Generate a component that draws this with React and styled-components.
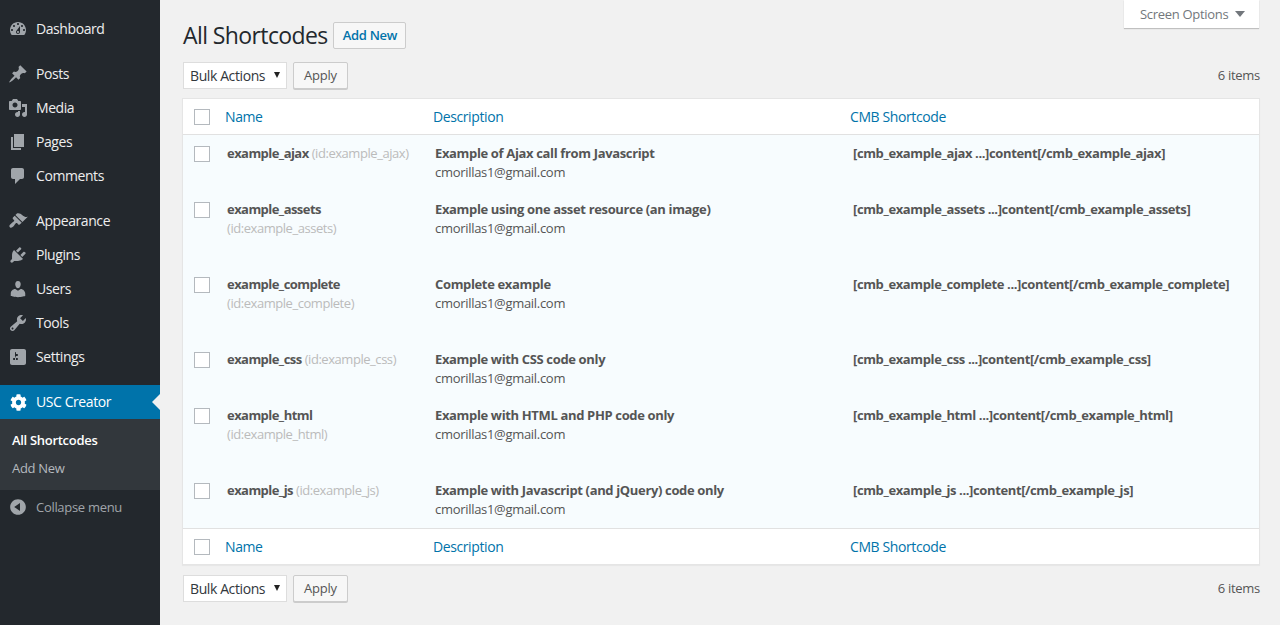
import styled, { createGlobalStyle } from "styled-components";
import { FaCog } from "react-icons/fa";

const GlobalStyle = createGlobalStyle`
  html, body {
    margin: 0;
    height: 100%;
    background: #f1f1f1;
    overflow: hidden;
  }
  * {
    box-sizing: border-box;
  }
  body {
    font-family: "Open Sans", "Liberation Sans", sans-serif;
    font-size: 13px;
    letter-spacing: -0.3px;
    color: #444;
  }
`;

const Page = styled.div`
  display: grid;
  grid-template-columns: 160px 1fr;
  height: 625px;
`;

const Sidebar = styled.nav`
  background: #23282d;
  padding-top: 12px;
`;

const MenuGroup = styled.ul`
  list-style: none;
  margin: 0 0 11px;
  padding: 0;
`;

const MenuItem = styled.li`
  position: relative;
  display: flex;
  align-items: center;
  height: 34px;
  padding: 0 0 2px 8px;
  gap: 8px;
  font-size: 14px;
  letter-spacing: -0.42px;
  color: ${(p) => (p.$current ? "#fff" : "#eee")};
  background: ${(p) => (p.$current ? "#0073aa" : "transparent")};
  svg {
    width: 20px;
    height: 20px;
    flex: none;
    margin-top: 2px;
    fill: ${(p) => (p.$current ? "#fff" : "#a0a5aa")};
  }
  ${(p) =>
    p.$current &&
    `&::after {
      content: "";
      position: absolute;
      right: 0;
      top: 9px;
      border: 8px solid transparent;
      border-right-color: #f1f1f1;
      border-left-width: 0;
    }`}
`;

const Cog = styled(FaCog)`
  && {
    width: 17px;
    height: 17px;
    margin: 2px 1px 0 2px;
  }
`;

const SubMenu = styled.ul`
  list-style: none;
  margin: 0;
  padding: 7px 0;
  height: 71px;
  background: #32373c;
`;

const SubItem = styled.li`
  height: 28px;
  line-height: 28px;
  padding-left: 12px;
  font-size: 13px;
  font-weight: ${(p) => (p.$current ? 600 : 400)};
  color: ${(p) => (p.$current ? "#fff" : "#b4b9be")};
`;

const CollapseRow = styled.div`
  display: flex;
  align-items: center;
  height: 34px;
  padding-left: 8px;
  gap: 8px;
  font-size: 13px;
  color: #a0a5aa;
  svg {
    width: 20px;
    height: 20px;
    fill: #a0a5aa;
  }
`;

const Main = styled.main`
  padding: 0 20px 0 22px;
  min-width: 0;
`;

const Header = styled.header`
  display: flex;
  justify-content: space-between;
  align-items: flex-start;
  height: 62px;
`;

const TitleRow = styled.div`
  display: flex;
  align-items: center;
  gap: 5px;
  margin: 21px 0 0 1px;
`;

const Title = styled.h1`
  margin: 0;
  padding-top: 1px;
  font-size: 23px;
  font-weight: 400;
  line-height: 27px;
  letter-spacing: -0.6px;
  color: #23282d;
`;

const Button = styled.button`
  height: 27px;
  padding: ${(p) => (p.$primary ? "0 8px 1px 9px" : "0 10px 1px")};
  border: 1px solid #ccc;
  border-radius: 2px;
  background: #f7f7f7;
  font: inherit;
  letter-spacing: ${(p) => (p.$primary ? "-0.3px" : "-0.2px")};
  font-size: 13px;
  font-weight: ${(p) => (p.$primary ? 600 : 400)};
  color: ${(p) => (p.$primary ? "#0073aa" : "#555")};
  box-shadow: ${(p) => (p.$primary ? "none" : "0 1px 0 #ccc")};
`;

const ScreenOptions = styled.div`
  display: flex;
  align-items: center;
  gap: 7px;
  width: 135px;
  height: 28px;
  margin-right: 1px;
  padding: 0 0 1px 16px;
  background: #fff;
  font-size: 13px;
  color: #72777c;
  box-shadow: 0 1px 1px rgba(0, 0, 0, 0.2);
`;

const CaretDown = styled.span`
  width: 0;
  height: 0;
  border: 5px solid transparent;
  border-top: 6px solid #72777c;
  border-bottom-width: 0;
`;

const TableNav = styled.div`
  display: flex;
  align-items: center;
  gap: 6px;
  height: 27px;
  margin-left: 1px;
`;

const SelectWrap = styled.div`
  position: relative;
  width: 104px;
  height: 27px;
  &::after {
    content: "";
    position: absolute;
    right: 7px;
    top: 10px;
    border: 3px solid transparent;
    border-top: 6px solid #222;
    border-bottom-width: 0;
  }
`;

const Select = styled.select`
  appearance: none;
  width: 100%;
  height: 100%;
  padding: 0 0 1px 6px;
  border: 1px solid #ddd;
  border-radius: 0;
  background: #fff;
  font: inherit;
  font-size: 14px;
  letter-spacing: -0.4px;
  color: #32373c;
`;

const Count = styled.span`
  margin-left: auto;
  padding-bottom: 2px;
  color: #555;
`;

const Table = styled.section`
  margin: 9px 0 10px;
  border: 1px solid #e5e5e5;
  background: #fff;
  box-shadow: 0 1px 1px rgba(0, 0, 0, 0.04);
`;

const cols = "42px 208px 417px 1fr";

const HeadRow = styled.div`
  display: grid;
  grid-template-columns: ${cols};
  align-items: center;
  height: 36px;
  border-${(p) => (p.$foot ? "top" : "bottom")}: 1px solid #e1e1e1;
  color: #0073aa;
  font-size: 14px;
  letter-spacing: -0.4px;
`;

const HeadCell = styled.span`
  white-space: nowrap;
`;

const Body = styled.div`
  background: #f7fcfe;
`;

const Row = styled.div`
  display: grid;
  grid-template-columns: ${cols};
  height: ${(p) => p.$height}px;
  padding-top: 9px;
`;

const Box = styled.span`
  display: block;
  width: 16px;
  height: 16px;
  margin-left: 11px;
  border: 1px solid #b4b9be;
  background: #fff;
`;

const CheckCell = styled.div`
  padding-top: 2px;
`;

const NameCell = styled.div`
  padding-left: 2px;
  padding-right: 20px;
  line-height: 19px;
`;

const Strong = styled.strong`
  font-weight: 700;
  color: #555;
  letter-spacing: ${(p) => p.$spacing || "-0.35px"};
`;

const IdLabel = styled.span`
  color: #bbb;
  letter-spacing: -0.45px;
`;

const DescCell = styled.div`
  padding-left: 2px;
  line-height: 19px;
  color: #555;
`;

const ShortcodeCell = styled.div`
  padding-left: 3px;
  line-height: 19px;
`;

const Line = styled.div``;

const icons = {
  dashboard:
    "M3.76 16h12.48c1.1-1.37 1.76-3.11 1.76-5 0-4.42-3.58-8-8-8s-8 3.58-8 8c0 1.89.66 3.63 1.76 5zM10 4c.55 0 1 .45 1 1s-.45 1-1 1-1-.45-1-1 .45-1 1-1zM6 6c.55 0 1 .45 1 1s-.45 1-1 1-1-.45-1-1 .45-1 1-1zm8 0c.55 0 1 .45 1 1s-.45 1-1 1-1-.45-1-1 .45-1 1-1zm-5.37 5.55L12 7v6c0 1.1-.9 2-2 2s-2-.9-2-2c0-.57.24-1.08.63-1.45zM4 10c.55 0 1 .45 1 1s-.45 1-1 1-1-.45-1-1 .45-1 1-1zm12 0c.55 0 1 .45 1 1s-.45 1-1 1-1-.45-1-1 .45-1 1-1zm-5 3c0-.55-.45-1-1-1s-1 .45-1 1 .45 1 1 1 1-.45 1-1z",
  posts:
    "M10.44 3.02l1.82-1.82 6.36 6.35-1.83 1.82c-1.05-.68-2.48-.57-3.41.36l-.75.75c-.92.93-1.04 2.35-.35 3.41l-1.83 1.82-2.41-2.41-2.8 2.79c-.42.42-3.38 2.71-3.8 2.29s1.86-3.39 2.28-3.81l2.79-2.79L4.1 9.36l1.83-1.82c1.05.69 2.48.57 3.4-.36l.75-.75c.93-.92 1.05-2.35.36-3.41z",
  media:
    "M13 11V4c0-.55-.45-1-1-1h-1.67L9 1H5L3.67 3H2c-.55 0-1 .45-1 1v7c0 .55.45 1 1 1h10c.55 0 1-.45 1-1zM7 4.5c1.38 0 2.5 1.12 2.5 2.5S8.38 9.5 7 9.5 4.5 8.38 4.5 7 5.62 4.5 7 4.5zM14 6h5v10.5c0 1.38-1.12 2.5-2.5 2.5S14 17.88 14 16.5s1.12-2.5 2.5-2.5c.17 0 .34.02.5.05V9h-3V6zm-4 8.05V13h2v3.5c0 1.38-1.12 2.5-2.5 2.5S7 17.88 7 16.5 8.12 14 9.5 14c.17 0 .34.02.5.05z",
  pages: "M6 15V2h10v13H6zm-1 1h8v2H3V5h2v11z",
  comments:
    "M5 2h9c1.1 0 2 .9 2 2v7c0 1.1-.9 2-2 2h-2l-5 5v-5H5c-1.1 0-2-.9-2-2V4c0-1.1.9-2 2-2z",
  appearance:
    "M14.48 11.06L7.41 3.99l1.5-1.5c.5-.56 2.3-.47 3.51.32 1.21.8 1.43 1.28 2.91 2.1 1.18.64 2.45 1.26 4.45.85zm-.71.71L6.7 4.7 4.93 6.47c-.39.39-.39 1.02 0 1.41l1.06 1.06c.39.39.39 1.03 0 1.42-.6.6-1.43 1.11-2.21 1.69-.35.26-.7.53-1.01.84C1.43 13.71.91 15.2 1.85 16.14c.94.95 2.43.43 3.44-.58.31-.31.58-.66.84-1.01.58-.78 1.09-1.61 1.69-2.21.39-.39 1.03-.39 1.42 0l1.06 1.06c.39.39 1.02.39 1.41 0z",
  plugins:
    "M13.11 4.36L9.87 7.6 8 5.73l3.24-3.24c.35-.34 1.05-.2 1.56.32.52.51.66 1.21.31 1.55zm-8 1.77l.91-1.12 9.01 9.01-1.19.84c-.71.71-2.63 1.16-3.82 1.16H6.14L4.9 17.26c-.59.59-1.54.59-2.12 0-.59-.58-.59-1.53 0-2.12l1.24-1.24v-3.88c0-1.13.4-3.19 1.09-3.89zm7.26 3.97l3.24-3.24c.34-.35 1.04-.21 1.55.31.52.51.66 1.21.31 1.55l-3.24 3.25z",
  users:
    "M10 9.25c-2.27 0-2.73-3.44-2.73-3.44C7 4.02 7.82 2 9.97 2c2.16 0 2.98 2.02 2.71 3.81 0 0-.41 3.44-2.68 3.44zm0 2.57L12.72 10c2.39 0 4.52 2.33 4.52 4.53v2.49s-3.65 1.13-7.24 1.13c-3.65 0-7.24-1.13-7.24-1.13v-2.49c0-2.25 1.94-4.48 4.47-4.48z",
  tools:
    "M16.68 9.77c-1.34 1.34-3.3 1.67-4.95.99l-5.41 6.52c-.99.99-2.59.99-3.58 0s-.99-2.59 0-3.57l6.52-5.42c-.68-1.65-.35-3.61.99-4.95 1.28-1.28 3.12-1.62 4.72-1.06l-2.89 2.89 2.82 2.82 2.86-2.87c.53 1.58.18 3.39-1.08 4.65zM3.81 16.21c.4.39 1.04.39 1.43 0 .4-.4.4-1.04 0-1.43-.39-.4-1.03-.4-1.43 0-.39.39-.39 1.03 0 1.43z",
  settings:
    "M18 16V4c0-1.1-.9-2-2-2H4c-1.1 0-2 .9-2 2v12c0 1.1.9 2 2 2h12c1.1 0 2-.9 2-2zM8 11h1c.55 0 1 .45 1 1s-.45 1-1 1H8v1.5c0 .28-.22.5-.5.5s-.5-.22-.5-.5V13H6c-.55 0-1-.45-1-1s.45-1 1-1h1V5.5c0-.28.22-.5.5-.5s.5.22.5.5V7h1c.55 0 1 .45 1 1s-.45 1-1 1h-1v5.5c0 .28-.22.5-.5.5s-.5-.22-.5-.5V9z",
  collapse:
    "M10 2.16c4.33 0 7.84 3.51 7.84 7.84s-3.51 7.84-7.84 7.84S2.16 14.33 2.16 10 5.71 2.16 10 2.16zm2 11.72V6.12L6.18 9.97z",
};

const Icon = ({ name }) => (
  <svg viewBox="0 0 20 20" aria-hidden="true">
    <path d={icons[name]} />
  </svg>
);

const shortcodes = [
  { id: "example_ajax", desc: "Example of Ajax call from Javascript", height: 56 },
  { id: "example_assets", desc: "Example using one asset resource (an image)", height: 75 },
  { id: "example_complete", desc: "Complete example", height: 75 },
  { id: "example_css", desc: "Example with CSS code only", height: 56 },
  { id: "example_html", desc: "Example with HTML and PHP code only", height: 75 },
  { id: "example_js", desc: "Example with Javascript (and jQuery) code only", height: 56 },
];

const menuTop = [["dashboard", "Dashboard"]];
const menuContent = [
  ["posts", "Posts"],
  ["media", "Media"],
  ["pages", "Pages"],
  ["comments", "Comments"],
];
const menuAdmin = [
  ["appearance", "Appearance"],
  ["plugins", "Plugins"],
  ["users", "Users"],
  ["tools", "Tools"],
  ["settings", "Settings"],
];

const Group = ({ items }) => (
  <MenuGroup>
    {items.map(([icon, label]) => (
      <MenuItem key={label}>
        <Icon name={icon} />
        {label}
      </MenuItem>
    ))}
  </MenuGroup>
);

const ColumnTitles = ({ foot }) => (
  <HeadRow $foot={foot}>
    <Box />
    <HeadCell>Name</HeadCell>
    <HeadCell>Description</HeadCell>
    <HeadCell>CMB Shortcode</HeadCell>
  </HeadRow>
);

const Actions = () => (
  <TableNav>
    <SelectWrap>
      <Select defaultValue="bulk">
        <option value="bulk">Bulk Actions</option>
      </Select>
    </SelectWrap>
    <Button>Apply</Button>
    <Count>6 items</Count>
  </TableNav>
);

const App = () => {
  return (
    <Page>
      <GlobalStyle />
      <Sidebar>
        <Group items={menuTop} />
        <Group items={menuContent} />
        <Group items={menuAdmin} />
        <MenuItem as="div" $current>
          <Cog />
          USC Creator
        </MenuItem>
        <SubMenu>
          <SubItem $current>All Shortcodes</SubItem>
          <SubItem>Add New</SubItem>
        </SubMenu>
        <CollapseRow>
          <Icon name="collapse" />
          Collapse menu
        </CollapseRow>
      </Sidebar>
      <Main>
        <Header>
          <TitleRow>
            <Title>All Shortcodes</Title>
            <Button $primary>Add New</Button>
          </TitleRow>
          <ScreenOptions>
            Screen Options
            <CaretDown />
          </ScreenOptions>
        </Header>
        <Actions />
        <Table>
          <ColumnTitles />
          <Body>
            {shortcodes.map((s) => (
              <Row key={s.id} $height={s.height}>
                <CheckCell>
                  <Box />
                </CheckCell>
                <NameCell>
                  <Strong $spacing="-0.55px">{s.id}</Strong> <IdLabel>(id:{s.id})</IdLabel>
                </NameCell>
                <DescCell>
                  <Strong>{s.desc}</Strong>
                  <Line>cmorillas1@gmail.com</Line>
                </DescCell>
                <ShortcodeCell>
                  <Strong $spacing="-0.38px">
                    [cmb_{s.id} ...]content[/cmb_{s.id}]
                  </Strong>
                </ShortcodeCell>
              </Row>
            ))}
          </Body>
          <ColumnTitles foot />
        </Table>
        <Actions />
      </Main>
    </Page>
  );
};

export default App;
